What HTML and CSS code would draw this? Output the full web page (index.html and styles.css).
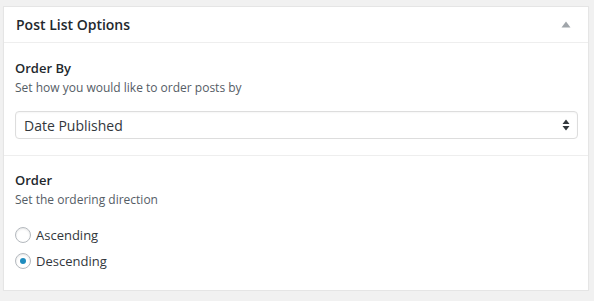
FILE: index.html
```html
<!DOCTYPE html>
<html lang="en">
<head>
    <meta charset="UTF-8">
    <title>Post List Options</title>
    <link rel="stylesheet" href="styles.css">
</head>
<body>
    <div class="postbox">
        <div class="postbox-header">
            <h2>Post List Options</h2>
            <svg class="toggle" width="10" height="7" viewBox="0 0 10 7"><path d="M5 0.5 L9.5 6.5 L0.5 6.5 Z" fill="#a0a5aa"/></svg>
        </div>

        <div class="field">
            <label class="field-label" for="orderby">Order By</label>
            <p class="field-desc">Set how you would like to order posts by</p>
            <div class="select-wrap">
                <select id="orderby">
                    <option selected>Date Published</option>
                    <option>Title</option>
                    <option>Last Modified</option>
                </select>
                <svg class="select-arrows" width="8" height="12" viewBox="0 0 8 12"><path d="M4 0.5 L7.5 5 L0.5 5 Z M4 11.5 L7.5 7 L0.5 7 Z" fill="#32373c"/></svg>
            </div>
        </div>

        <div class="field">
            <span class="field-label">Order</span>
            <p class="field-desc">Set the ordering direction</p>
            <div class="radios">
                <label class="radio-row"><input type="radio" name="order" value="asc"> Ascending</label>
                <label class="radio-row"><input type="radio" name="order" value="desc" checked> Descending</label>
            </div>
        </div>
    </div>
</body>
</html>
```

FILE: styles.css
```css
body {
    margin: 0;
    background: #f1f1f1;
    font-family: "Open Sans", "Liberation Sans", sans-serif;
    color: #32373c;
}
.postbox {
    width: 584px;
    margin: 6px 0 0 3px;
    background: #fff;
    border: 1px solid #e5e5e5;
    box-shadow: 0 1px 1px rgba(0, 0, 0, 0.04);
}
.postbox-header {
    height: 35px;
    display: flex;
    align-items: center;
    justify-content: space-between;
    padding: 0 17px 0 12px;
    border-bottom: 1px solid #eee;
}
.postbox-header h2 {
    margin: 0;
    font-size: 14px;
    font-weight: 600;
    color: #23282d;
}
.toggle {
    display: block;
}
.field {
    padding: 16px 10px 16px 11px;
}
.field + .field {
    border-top: 1px solid #eee;
    padding-top: 15px;
}
.field-label {
    display: block;
    font-size: 13px;
    font-weight: 600;
    line-height: 18px;
    color: #23282d;
}
.field-desc {
    margin: 2px 0 0;
    font-size: 12px;
    line-height: 18px;
    color: #555d66;
}
.select-wrap {
    position: relative;
    margin-top: 14px;
}
select {
    -webkit-appearance: none;
    appearance: none;
    display: block;
    width: 100%;
    height: 28px;
    padding: 0 24px 0 8px;
    border: 1px solid #ddd;
    border-radius: 4px;
    background: #fff;
    box-shadow: inset 0 1px 2px rgba(0, 0, 0, 0.04);
    font-family: inherit;
    font-size: 14px;
    color: #32373c;
}
.select-arrows {
    position: absolute;
    right: 8px;
    top: 8px;
    pointer-events: none;
}
.radios {
    margin-top: 13px;
}
.radio-row {
    display: flex;
    align-items: center;
    height: 26px;
    font-size: 13px;
    color: #32373c;
}
input[type=radio] {
    -webkit-appearance: none;
    appearance: none;
    width: 16px;
    height: 16px;
    margin: 0 5px 0 0;
    border: 1px solid #b4b9be;
    border-radius: 50%;
    background: #fff;
    box-shadow: inset 0 1px 2px rgba(0, 0, 0, 0.1);
    display: flex;
    align-items: center;
    justify-content: center;
}
input[type=radio]:checked::before {
    content: "";
    width: 6px;
    height: 6px;
    border-radius: 50%;
    background: #1e8cbe;
}
```
